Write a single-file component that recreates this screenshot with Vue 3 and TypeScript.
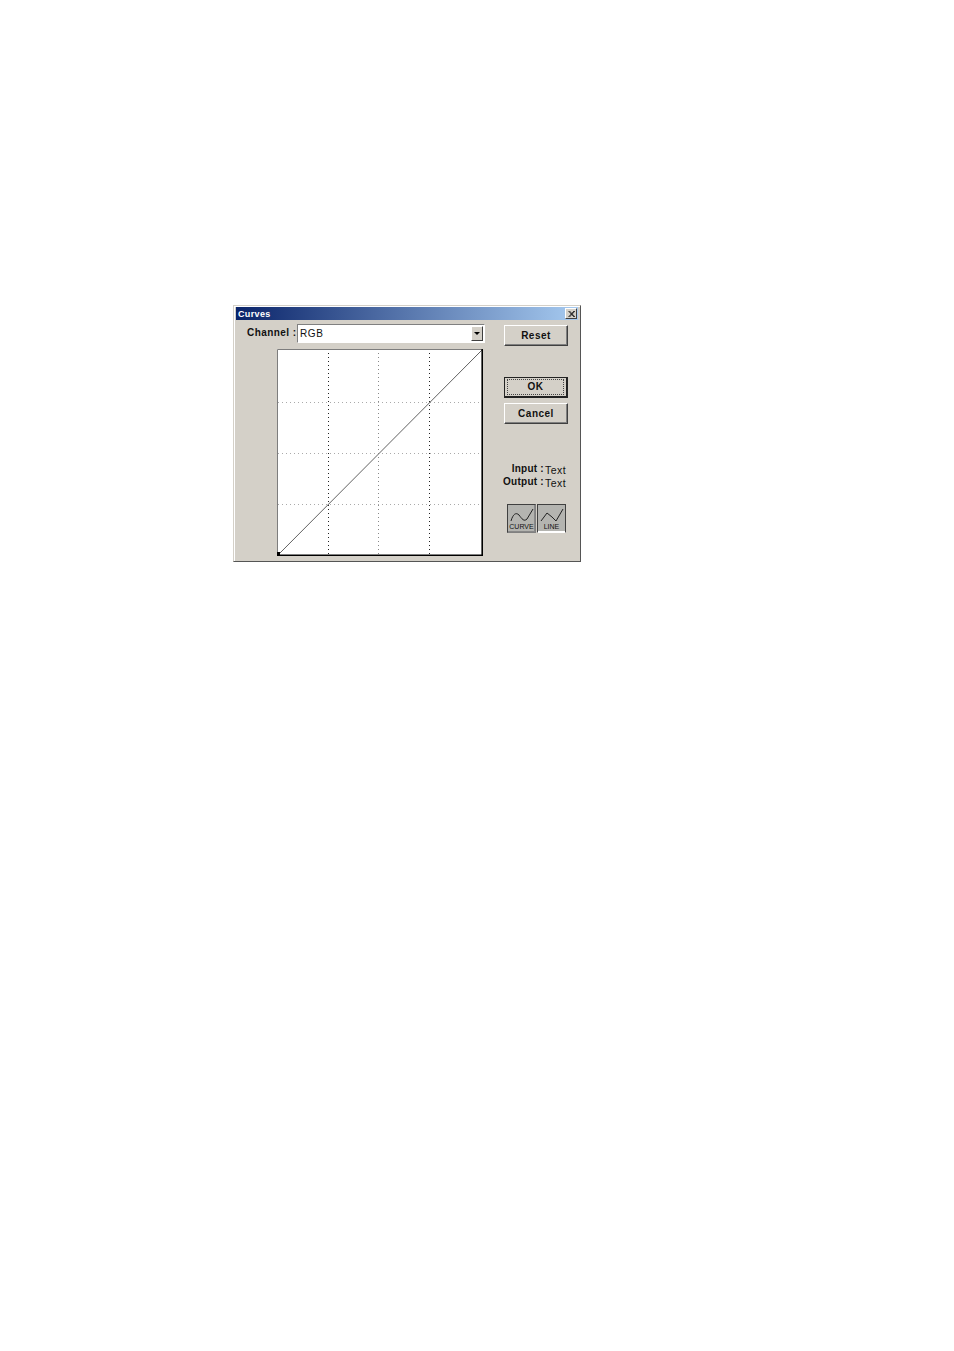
<script setup lang="ts">
const vLines: [number, string][] = [[51.5, '#222'], [101.5, '#888'], [152.5, '#222']]
const hLines: number[] = [53.5, 104.5, 155.5]
</script>

<template>
  <div class="page">
    <div class="dialog">
      <div class="titlebar">
        <span class="title">Curves</span>
        <span class="close">
          <svg width="7" height="6" viewBox="0 0 7 6"><path d="M0.5 0 L6 6 M1.5 0 L7 6 M6 0 L0.5 6 M7 0 L1.5 6" stroke="#222" stroke-width="0.9" fill="none" /></svg>
        </span>
      </div>
      <div class="body">
        <div class="left">
          <div class="channel">
            <span class="channel-label">Channel :</span>
            <div class="select">
              <span class="select-value">RGB</span>
              <span class="arrow-btn"><i class="arrow"></i></span>
            </div>
          </div>
          <svg class="plot" width="206" height="207" viewBox="0 0 206 207">
            <rect x="0" y="0" width="206" height="207" fill="#fff" />
            <line v-for="v in vLines" :key="v[0]" :x1="v[0]" y1="0" :x2="v[0]" y2="206" :stroke="v[1]" stroke-dasharray="1 3" />
            <line v-for="h in hLines" :key="h" x1="1" :y1="h" x2="204" :y2="h" stroke="#aaa" stroke-dasharray="1 3" />
            <line x1="1" y1="206" x2="205" y2="1" stroke="#444" stroke-width="0.85" />
            <path d="M0.5 207 V0.5 H205" stroke="#7d7d7d" fill="none" />
            <path d="M205.2 0 V206.2 H0" stroke="#000" stroke-width="1.6" fill="none" />
            <rect x="0" y="203" width="3" height="3" fill="#000" />
          </svg>
        </div>
        <div class="right">
          <button class="btn reset">Reset</button>
          <button class="btn ok"><span class="focus"><span class="ok-label">OK</span></span></button>
          <button class="btn cancel">Cancel</button>
          <div class="readout">
            <div class="read-row"><b>Input :</b><span>Text</span></div>
            <div class="read-row"><b>Output :</b><span>Text</span></div>
          </div>
          <div class="modes">
            <div class="mode pressed">
              <svg width="25" height="16" viewBox="0 0 25 16"><path d="M2 14 C4 7 7 5 10 8 C13 12 15 15 18 12 C20 9 22 5 24 2" stroke="#222" fill="none" /></svg>
              <span>CURVE</span>
            </div>
            <div class="mode raised">
              <svg width="25" height="16" viewBox="0 0 25 16"><path d="M2 14 L8 6 L13 10 L17 14 L24 2" stroke="#222" fill="none" /></svg>
              <span>LINE</span>
            </div>
          </div>
        </div>
      </div>
    </div>
  </div>
</template>

<style scoped>
.page {
  width: 954px;
  height: 1351px;
  background: #fff;
  box-sizing: border-box;
  padding: 305px 0 0 233px;
  font-family: "Liberation Sans", Arial, sans-serif;
  color: #111;
}
.dialog {
  width: 348px;
  height: 257px;
  box-sizing: border-box;
  background: #d4d0c8;
  border: 1px solid;
  border-color: #d4d0c8 #555 #555 #d4d0c8;
  box-shadow: inset 1px 1px 0 #fff;
  padding: 1px 2px 0;
}
.titlebar {
  height: 13px;
  display: flex;
  align-items: center;
  justify-content: space-between;
  background: linear-gradient(90deg, #0a246a, #a6caf0);
  padding: 0 1px 0 2px;
}
.title {
  color: #fff;
  font-size: 9px;
  font-weight: 700;
  letter-spacing: 0.35px;
}
.close {
  width: 12px;
  height: 11px;
  box-sizing: border-box;
  display: flex;
  align-items: center;
  justify-content: center;
  background: #d4d0c8;
  border: 1px solid;
  border-color: #fff #404040 #404040 #fff;
}
.body {
  display: flex;
}
.left {
  width: 258px;
  padding-left: 10px;
  flex: none;
}
.channel {
  display: flex;
  align-items: center;
  height: 19px;
  margin-top: 4px;
}
.channel-label {
  width: 51px;
  flex: none;
  font-size: 10px;
  font-weight: 700;
  letter-spacing: 0.45px;
  white-space: nowrap;
  position: relative;
  top: -1px;
  left: 1px;
}
.select {
  width: 188px;
  height: 19px;
  box-sizing: border-box;
  background: #fff;
  border: 1px solid;
  border-color: #808080 #fff #fff #808080;
  display: flex;
  align-items: center;
  justify-content: space-between;
  padding: 1px;
}
.select-value {
  font-size: 10px;
  padding-left: 1px;
  letter-spacing: 0.6px;
}
.arrow-btn {
  width: 12px;
  height: 15px;
  box-sizing: border-box;
  background: #d4d0c8;
  border: 1px solid;
  border-color: #fff #404040 #404040 #fff;
  display: flex;
  align-items: center;
  justify-content: center;
}
.arrow {
  width: 0;
  height: 0;
  border-left: 3px solid transparent;
  border-right: 3px solid transparent;
  border-top: 3px solid #000;
}
.plot {
  display: block;
  margin: 6px 0 0 31px;
}
.right {
  width: 70px;
  display: flex;
  flex-direction: column;
  align-items: flex-start;
}
.btn {
  width: 64px;
  height: 21px;
  box-sizing: border-box;
  background: #d4d0c8;
  border: 1px solid;
  border-color: #fff #404040 #404040 #fff;
  box-shadow: inset -1px -1px 0 #808080;
  font-family: "Liberation Sans", Arial, sans-serif;
  font-size: 10px;
  font-weight: 700;
  letter-spacing: 0.5px;
  color: #111;
  padding: 0;
  display: flex;
  align-items: center;
  justify-content: center;
}
.reset { margin-top: 5px; }
.ok {
  margin-top: 31px;
  border-width: 1px 2px 2px 1px;
  border-color: #222;
  box-shadow: none;
  padding: 2px;
}
.focus {
  flex: 1;
  height: 100%;
  display: flex;
  align-items: center;
  justify-content: center;
  border: 1px dotted #444;
}
.ok-label {
  position: relative;
  top: -1px;
}
.cancel { margin-top: 5px; }
.readout {
  margin-top: 39px;
  width: 62px;
  display: flex;
  flex-direction: column;
  align-items: flex-end;
  font-size: 10.5px;
  line-height: 13px;
  white-space: nowrap;
}
.read-row {
  display: flex;
  gap: 1px;
  align-items: baseline;
}
.read-row b {
  font-size: 10px;
  font-weight: 700;
  letter-spacing: 0.25px;
  position: relative;
  top: -1px;
}
.read-row span {
  letter-spacing: 0.45px;
  position: relative;
  top: 1px;
}
.modes {
  display: flex;
  gap: 1px;
  margin: 15px 0 0 3px;
}
.mode {
  width: 29px;
  height: 29px;
  box-sizing: border-box;
  border: 1px solid;
  background: #b4b4b0;
  display: flex;
  flex-direction: column;
  align-items: center;
  font-size: 7px;
  line-height: 7px;
}
.mode svg { display: block; margin-top: 2px; }
.pressed { border-color: #404040 #808080 #808080 #404040; box-shadow: inset -1px -1px 0 #888; }
.raised { border-color: #404040 #404040 #fff #404040; box-shadow: inset 0 -1px 0 #fff; }
</style>
